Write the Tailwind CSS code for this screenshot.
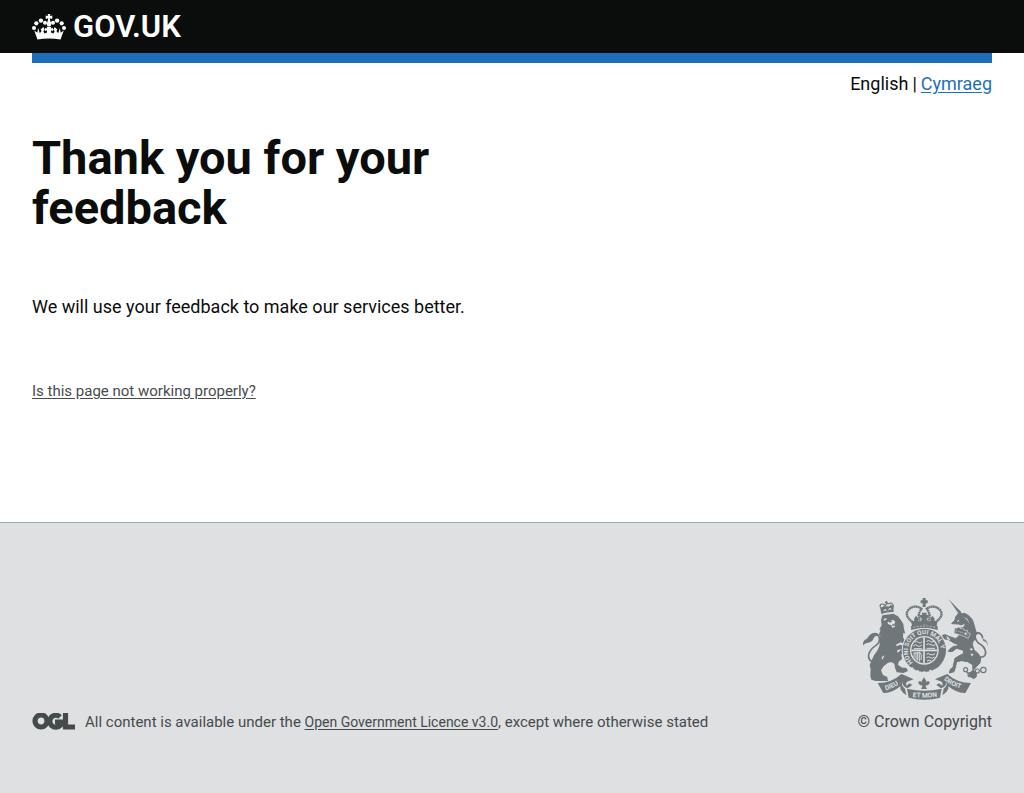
<!DOCTYPE html>
<html lang="en">
<head>
<meta charset="utf-8">
<meta name="viewport" content="width=device-width, initial-scale=1">
<title>Thank you for your feedback - GOV.UK</title>
<script src="https://cdn.jsdelivr.net/npm/@tailwindcss/browser@4"></script>
</head>
<body class="flex min-h-screen flex-col bg-white font-['Roboto','Noto_Sans',sans-serif] text-lg leading-6 text-[#0b0c0c]">
<header class="bg-[#0b0c0c] px-8">
  <div class="flex h-[53px] items-center">
    <a href="#" class="flex items-center gap-[7px] text-white" aria-label="GOV.UK">
      <svg class="h-[26px] w-[34px]" viewBox="0 0 34 26" fill="currentColor" aria-hidden="true">
        <circle cx="2" cy="14" r="2"/><circle cx="4.300" cy="9.300" r="2.100"/><circle cx="8.900" cy="6.600" r="2.200"/><circle cx="13" cy="8.700" r="2"/>
        <circle cx="32" cy="14" r="2"/><circle cx="29.700" cy="9.300" r="2.100"/><circle cx="25.100" cy="6.600" r="2.200"/><circle cx="21" cy="8.700" r="2"/>
        <circle cx="17" cy="10" r="2.400"/>
        <path d="M15.700 0h2.600l-.5 2 2.500-.6v3.500l-2.500-.7.7 4h-3l.7-4-2.500.7V1.400l2.500.6z"/>
        <path d="M5.500 25.500 2.200 16.500l3.100 2.300.8-4.800 1.700 5.200 1.800-2.200-1-1.500 2.700-2.500 1.500 3-1.500 1 1.200 2.500 2.500-1-.2-2.300-1.800.7v-3l2.200.7-.5-1.900h4.600l-.5 1.900 2.200-.7v3l-1.800-.7-.2 2.300 2.500 1 1.200-2.500-1.500-1 1.500-3 2.700 2.500-1 1.500 1.800 2.200 1.700-5.200.8 4.800 3.100-2.300-3.300 9Q17 23.500 5.500 25.500z"/>
      </svg>
      <span class="text-[31px] leading-8 font-semibold">GOV.UK</span>
    </a>
  </div>
</header>
<main class="grow px-8">
  <div class="h-[10px] bg-[#1d70b8]"></div>
  <nav class="flex justify-end gap-1 pt-2 leading-[26px]" aria-label="Language">
    <span>English</span><span>|</span><a href="#" class="text-[#1d70b8] underline underline-offset-2">Cymraeg</a>
  </nav>
  <h1 class="mt-9 max-w-[480px] text-[47px] leading-[50px] font-bold">Thank you for your feedback</h1>
  <p class="mt-[59px] leading-[30px]">We will use your feedback to make our services better.</p>
  <p class="mt-[57px] text-[15px]"><a href="#" class="text-[#484c4f] underline underline-offset-2">Is this page not working properly?</a></p>
</main>
<footer class="flex h-[271px] items-end justify-between border-t border-[#a1acb2] bg-[#dee0e2] px-8 pb-[59px] text-[15px] text-[#454a4d]">
  <div class="flex items-center gap-[10px]">
    <svg class="h-[18px] w-[43px]" viewBox="0 0 43 18" fill="none" stroke="#454a4d" stroke-width="5.200" aria-label="Open Government Licence" role="img">
      <circle cx="9" cy="8" r="6"/><path d="M28 4a6 6 0 1 0 .3 8.200V9H23M33.500 0v14H43"/>
    </svg>
    <p>All content is available under the <a href="#" class="text-sm underline underline-offset-2">Open Government Licence v3.0</a>, except where otherwise stated</p>
  </div>
  <a href="#" class="flex flex-col items-end gap-[10px] text-base">
    <svg class="mr-1 h-[102px] w-[125px]" viewBox="12 15 375 306" fill="#6f777b" aria-hidden="true">
      <!-- Lion -->
      <path d="M67 63q-2-12-4-21 9 3 13-5 2 7 10 3 8 2 8-5 6 4 11 1-2 11-1 21-18-1-37 6z"/>
      <path d="M64 43q-3-10 7-10 7 0 9 7 1-11 9-8 10-5 14 6M78 28h8M82 24v10" fill="none" stroke="#6f777b" stroke-width="3.500"/>
      <path d="M74 55l5-7 3 6M88 52l5-7 4 6" fill="none" stroke="#dee0e2" stroke-width="3"/>
      <path d="M70 67l33-5 14 8 8 10 8 13 2 15 4 14-6-3-1 13 4 8 14 1 7 7-2 8-14 1 0 8-8-1 2 14-8 6 2 14-10 8-2 10 13 8 12 0 5 10-14 6-20-2-5-14-2-12-10-5-10 3-12 10-8 12 6 14 13 6 2 12H50l-13-4-3-12 1-19-3-12 6-15 8-17 10-14 6-15-1-16 3-14-6 3 7-19-4 0 7-14-2-14z"/>
      <path d="M88 86l8-4 8-1 5 6-3 5 2 9-8 4-3-8-9-3-3-6zM74 78l10-3-3 6-7 2z" fill="#dee0e2"/>
      <path d="M88 84l8-3 3 5-7 3zM99 94h8v4h-7z"/>
      <path d="M111 155l14-7 12 5-8 4-6-2-10 5zM114 172l14-4-12 12zM68 192l9-5-7 14z" fill="#dee0e2"/>
      <path d="M52 210Q25 205 29 185Q33 169 50 158T59 128Q50 116 34 128" fill="none" stroke="#6f777b" stroke-width="5"/>
      <path d="M12 158q-2-16 12-21 7-15 25-17 10 2 12 13-8-7-15-1-5 15-18 17-12 1-16 9z"/>
      <!-- Royal crown -->
      <path d="M191 15h9v7h6v9h-6v11h-9V31h-6v-9h6z"/>
      <path d="M162 88Q133 67 149 50Q168 32 188 48M229 88Q258 67 242 50Q223 32 203 48M190 45Q173 64 183 84M201 45Q218 64 208 84" fill="none" stroke="#6f777b" stroke-width="7" stroke-dasharray="6 1"/>
      <path d="M159 98l-2-12 9-2-1-7 6-9 7 9-1 7 8 1 4-6-6-7v-6h6v-7h14v7h6v6l-6 7 4 6 8-1-1-7 6-9 7 9-1 7 9 2-2 12q-36-10-73 0zM156 99q40-12 80 0v12q-40-12-80 0z"/>
      <path d="M163 103q33-8 66 0" stroke="#dee0e2" fill="none" stroke-width="2" stroke-dasharray="6 4"/>
      <!-- Unicorn -->
      <path d="M268 17l38 40-6 7z"/>
      <path d="M278 92l10-11 2-10 7-7 4-11 7 10 9-2 12 7 11 12 5 15 4 15 4 12-4 3 1 13-8 7-2 10 5 16 13 11 7 13-2 15-11 11-9 11 9 7 0 12-8 6-15-10 5-9 8-6-1-17-15-9-18-3-15 3-4 18-4 12-14 4 3-11 8-6 6-27 15-9 10-5 1-9-7-3-14-4-14 10-11-1 4-6 12-9 13-1-2-5-12-5-14-9-14-3-5-10 9-2 13 6 18 6 9-7 4-13-2-10 12-4 6-7-4-4-9 4-7-3z" stroke="#6f777b" stroke-width="3"/>
      <path d="M293 84l8-4-3 7zM313 72l12 5 7 16-8-13zM262 129l8 5 4 8-9-3z" fill="#dee0e2"/>
      <path d="M287 104l7 2 5-5 6 6 7-2 4 7 9 0 1 7 8 3-6 14q-20-11-43-15z" stroke="#dee0e2" stroke-width="2"/>
      <path d="M290 114q20 3 36 13" fill="none" stroke="#dee0e2" stroke-width="2" stroke-dasharray="4 3"/>
      <path d="M351 190Q380 198 380 178Q378 160 358 150Q338 126 358 120Q370 122 371 136" fill="none" stroke="#6f777b" stroke-width="5"/>
      <path d="M387 162q-1-16-14-18-3-19-15-22-8-1-9 6-3-5 1-9 11-5 18 5 4 5 4 13 16 6 15 25z"/>
      <g fill="none" stroke="#6f777b" stroke-width="3.500"><circle cx="320" cy="230" r="6"/><circle cx="333" cy="245" r="6"/><circle cx="355" cy="234" r="6"/><circle cx="373" cy="231" r="8"/><path d="M338 242l12-4M322 237l6 4"/></g>
      <g fill="#dee0e2" stroke="#6f777b" stroke-width="3"><circle cx="320" cy="122" r="5"/><circle cx="337" cy="169" r="5"/><circle cx="339" cy="185" r="5"/></g>
      <!-- Garter and shield -->
      <circle cx="196" cy="172" r="68" fill="#dee0e2"/>
      <circle cx="196" cy="172" r="65"/>
      <circle cx="196" cy="172" r="43" fill="#dee0e2"/>
      <path id="garter" d="M162 208A49 49 0 1 1 230 208" fill="none"/>
      <text fill="#dee0e2" font-family="Roboto,sans-serif" font-weight="700" font-size="19"><textPath href="#garter">HONI SOIT QUI MAL Y</textPath></text>
      <circle cx="196" cy="172" r="39"/>
      <path d="M195 133v78M157 172h78" stroke="#dee0e2" stroke-width="5"/>
      <path d="M167 148q6-6 11 0t11-2M163 158q7-5 12 0t13-1M165 167h24M203 145q6-5 11 0t11 0M202 155q7-5 13 0t15 0M203 166h25M202 184q6-5 11 0t15-2M202 194q7-5 12 0t12-2M204 204q6-4 12-1M165 179v15M165 180q10 1 17-3 8 6 4 24M171 180v20m5-22v25m5-24v27" fill="none" stroke="#dee0e2" stroke-width="3"/>
      <path d="M157 224l6 3m11 6l5 2m14 2h6m12-2l6-3" stroke="#dee0e2" stroke-width="5"/>
      <!-- Motto ribbons -->
      <path d="M56 270q42 0 72-28l8 16-7 11q-2 9 9 18l4 20q-20-13-18-27-27 22-51 20z"/>
      <path d="M336 270q-42 0-72-28l-8 16 7 11q2 9-9 18l-4 20q20-13 18-27 27 22 51 20z"/>
      <path d="M130 244l34 15-14 5q-11 2-8 14l10-7 8 5-14 10q-16-5-17-22zM262 244l-34 15 14 5q11 2 8 14l-10-7-8 5 14 10q16-5 17-22z"/>
      <path d="M144 287q52 12 104 0l-5 27q-47 12-94 0z"/>
      <path id="dieu" d="M80 292q28-7 52-28" fill="none"/><path id="droit" d="M254 260q26 23 64 30" fill="none"/><path id="mon" d="M149 310q46 8 94 0" fill="none"/>
      <g fill="#dee0e2" font-family="Roboto,sans-serif" font-weight="700" font-size="20">
        <text><textPath href="#dieu">DIEU</textPath></text>
        <text><textPath href="#droit">DROIT</textPath></text>
        <text><textPath href="#mon" startOffset="12">ET MON</textPath></text>
      </g>
      <path d="M195 253l7 11-4 11q2-13 12-10 5 6-3 11l-8 2 5 10h-18l5-10-8-2q-8-5-3-11 10-3 12 10l-4-11z"/>
    </svg>
    <span>© Crown Copyright</span>
  </a>
</footer>
</body>
</html>
